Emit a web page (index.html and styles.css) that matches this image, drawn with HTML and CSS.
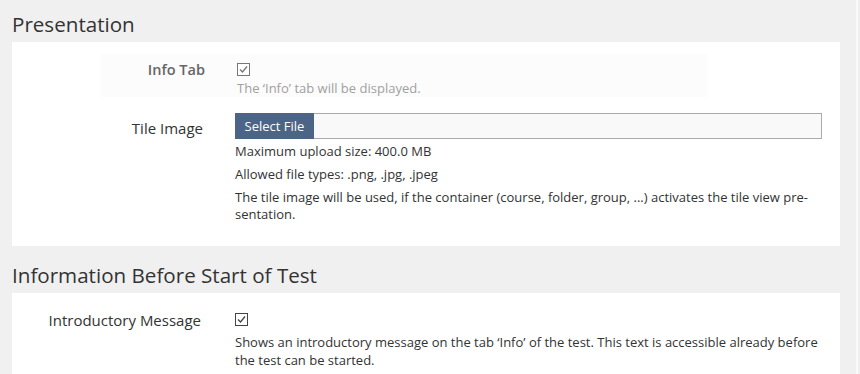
FILE: index.html
```html
<!DOCTYPE html>
<html lang="en">
<head>
  <meta charset="UTF-8">
  <meta name="viewport" content="width=device-width, initial-scale=1">
  <title>Test Settings</title>
  <link rel="stylesheet" href="styles.css">
</head>
<body>
  <div class="page">
    <h2 class="section-title">Presentation</h2>
    <div class="panel">
      <div class="row row-focus">
        <label class="row-label bold">Info Tab</label>
        <div class="row-field">
          <div class="check-line">
            <svg class="check faded" width="13" height="13" viewBox="0 0 13 13"><rect x="0.5" y="0.5" width="12" height="12" fill="#fff" stroke="currentColor"/><path d="M3 6.5 L5.5 9 L10 3.5" fill="none" stroke="currentColor" stroke-width="1.4"/></svg>
          </div>
          <div class="help faded-text">The ‘Info’ tab will be displayed.</div>
        </div>
      </div>

      <div class="row row-file">
        <label class="row-label">Tile Image</label>
        <div class="row-field">
          <div class="file-input">
            <button type="button" class="btn-file">Select File</button>
            <div class="file-name"></div>
          </div>
          <div class="help first">Maximum upload size: 400.0 MB</div>
          <div class="help">Allowed file types: .png, .jpg, .jpeg</div>
          <div class="help">The tile image will be used, if the container (course, folder, group, ...) activates the tile view pre-<br>sentation.</div>
        </div>
      </div>
    </div>

    <h2 class="section-title second">Information Before Start of Test</h2>
    <div class="panel">
      <div class="row">
        <label class="row-label intro">Introductory Message</label>
        <div class="row-field">
          <div class="check-line tall">
            <svg class="check" width="13" height="13" viewBox="0 0 13 13"><rect x="0.5" y="0.5" width="12" height="12" fill="#fff" stroke="currentColor"/><path d="M3 6.5 L5.5 9 L10 3.5" fill="none" stroke="currentColor" stroke-width="1.3"/></svg>
          </div>
          <div class="help wide">Shows an introductory message on the tab ‘Info’ of the test. This text is accessible already before<br>the test can be started.</div>
        </div>
      </div>
    </div>
  </div>
</body>
</html>
```

FILE: styles.css
```css
body { margin: 0; background: #f0f0f0; font-family: 'Open Sans', 'Liberation Sans', sans-serif; color: #333; overflow: hidden; }
.page { width: 856px; border-right: 2px solid #f9f9f9; height: 374px; overflow: hidden; }
.section-title { margin: 0; padding: 12px 12px 6px; font-size: 20.6px; line-height: 24px; font-weight: normal; color: #333; }
.section-title.second { padding-top: 17px; }
.panel { background: #fff; margin: 0 16px 0 12px; padding: 12px 18px 23px 0; }
.row { display: grid; grid-template-columns: 193px 1fr; column-gap: 30px; }
.row-label { font-size: 15px; line-height: 20px; padding-top: 6px; text-align: right; }
.row-label.bold { font-weight: 600; color: #666; font-size: 14.5px; }
.row-label.intro { padding-right: 4px; padding-top: 5px; }
.row-field { padding-top: 6px; }
.row-focus { background: #fcfcfc; margin-left: 89px; width: 606px; grid-template-columns: 104px 1fr; column-gap: 32px; }
.row-focus .row-field { padding-top: 0; }
.check-line { padding-top: 9px; box-sizing: border-box; height: 26px; }
.check-line.tall { height: 21px; padding-top: 2px; }
.check { display: block; color: #444; }
.check.faded { color: #777; }
.help { font-size: 13px; line-height: 17px; margin-top: 6px; }
.help.first { margin-top: 4px; }
.help.wide { margin-top: 1px; line-height: 18px; }
.row-focus .help { margin-top: 0; }
.faded-text { color: #a0a0a0; }
.row-file { margin-top: 16px; }
.row-file .row-field { padding-top: 0; }
.row-file .row-label { padding-top: 5px; padding-right: 2px; }
.file-input { display: flex; height: 26px; }
.btn-file { background: #4c6586; color: #fff; border: none; font-family: inherit; font-size: 13px; padding: 0; height: 26px; width: 79px; }
.file-name { flex: 1; background: #f9f9f9; border: 1px solid #aaa; border-left: none; }
```
